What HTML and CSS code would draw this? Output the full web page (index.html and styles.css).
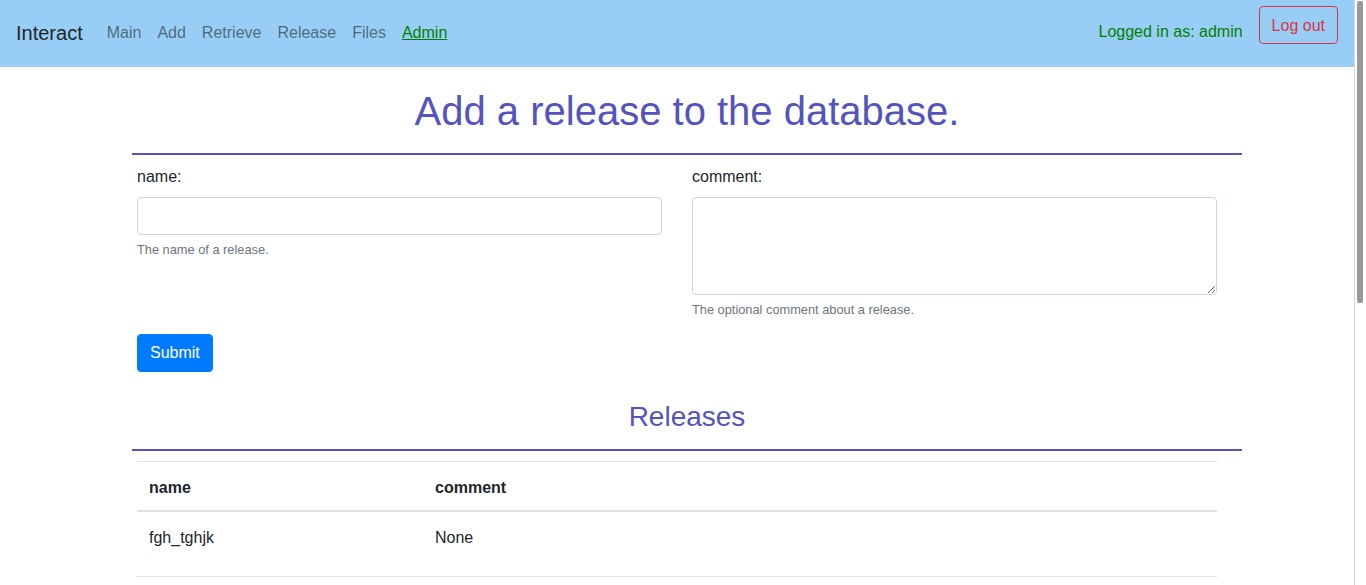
FILE: index.html
```html
<!DOCTYPE html>
<html lang="en">
<head>
<meta charset="utf-8">
<title>Interact - Release</title>
<link rel="stylesheet" href="styles.css">
</head>
<body>
<nav class="navbar">
  <div class="nav-left">
    <a class="brand" href="#">Interact</a>
    <ul class="nav-links">
      <li><a href="#">Main</a></li>
      <li><a href="#">Add</a></li>
      <li><a href="#">Retrieve</a></li>
      <li><a href="#">Release</a></li>
      <li><a href="#">Files</a></li>
      <li><a class="active" href="#">Admin</a></li>
    </ul>
  </div>
  <div class="nav-right">
    <span class="logged">Logged in as: admin</span>
    <button class="btn-logout" type="button">Log out</button>
  </div>
</nav>

<main class="container">
  <div class="heading-block">
    <h1 class="title">Add a release to the database.</h1>
    <hr class="rule">
  </div>

  <form class="release-form">
    <div class="form-row">
      <div class="form-group">
        <label for="name">name:</label>
        <input id="name" class="form-control" type="text">
        <small class="help">The name of a release.</small>
      </div>
      <div class="form-group">
        <label for="comment">comment:</label>
        <textarea id="comment" class="form-control textarea"></textarea>
        <small class="help">The optional comment about a release.</small>
      </div>
    </div>
    <button class="btn-submit" type="submit">Submit</button>
  </form>

  <div class="heading-block">
    <h3 class="subtitle">Releases</h3>
    <hr class="rule rule-2">
  </div>

  <div class="table-wrap">
    <table class="table">
      <thead>
        <tr><th class="col-name">name</th><th>comment</th></tr>
      </thead>
      <tbody>
        <tr><td>fgh_tghjk</td><td>None</td></tr>
        <tr><td>&nbsp;</td><td>&nbsp;</td></tr>
      </tbody>
    </table>
  </div>
</main>

<div class="scrollbar" aria-hidden="true"><div class="scrollbar-thumb"></div></div>
</body>
</html>
```

FILE: styles.css
```css
* { box-sizing: border-box; }

html, body {
  margin: 0;
  padding: 0;
}

body {
  font-family: "Liberation Sans", Arial, sans-serif;
  font-size: 16px;
  line-height: 1.5;
  color: #212529;
  background: #fff;
  padding-right: 12px;
}

.scrollbar {
  position: fixed;
  top: 0;
  right: 0;
  bottom: 0;
  width: 12px;
  background: #fff;
  border-left: 1px solid #d4d4d4;
  padding: 1px 3px 0 2px;
}

.scrollbar-thumb {
  height: 302px;
  background: #999;
  border-radius: 2px;
}

.navbar {
  height: 67px;
  background: #98cef5;
  display: flex;
  justify-content: space-between;
  align-items: center;
  padding: 0 16px;
}

.nav-left {
  display: flex;
  align-items: center;
  margin-top: -2px;
}

.brand {
  font-size: 20px;
  line-height: 30px;
  color: #212529;
  text-decoration: none;
  margin-right: 16px;
}

.nav-links {
  list-style: none;
  margin: 0;
  padding: 0;
  display: flex;
}

.nav-links a {
  display: block;
  padding: 8px;
  color: rgba(0, 0, 0, 0.5);
  text-decoration: none;
}

.nav-links a.active {
  color: #008000;
  text-decoration: underline;
}

.nav-right {
  display: flex;
  align-items: flex-start;
  align-self: stretch;
  gap: 16px;
}

.logged {
  color: #008000;
  margin-top: 20px;
}

.btn-logout {
  margin-top: 6px;
  height: 38px;
  padding: 1px 12px 0;
  font-family: inherit;
  font-size: 16px;
  color: #dc3545;
  background: transparent;
  border: 1px solid #dc3545;
  border-radius: 4px;
  line-height: 1.5;
}

.container {
  width: 1110px;
  margin: 0 auto;
}

.heading-block {
  margin-left: 10px;
  margin-right: -10px;
}

.title {
  margin: 20px 0 18px;
  font-size: 40px;
  font-weight: 400;
  line-height: 1.2;
  text-align: center;
  color: #5553bd;
}

.rule {
  margin: 0;
  border: 0;
  height: 2px;
  background: #5553bd;
}

.release-form {
  padding: 10px 15px 0;
}

.form-row {
  display: grid;
  grid-template-columns: 525px 525px;
  column-gap: 30px;
}

.form-group {
  display: flex;
  flex-direction: column;
  margin-bottom: 15px;
}

.form-group label {
  line-height: 24px;
  margin-bottom: 8px;
}

.form-control {
  display: block;
  width: 100%;
  height: 38px;
  padding: 6px 12px;
  font-family: inherit;
  font-size: 16px;
  color: #495057;
  background: #fff;
  border: 1px solid #ced4da;
  border-radius: 4px;
}

.textarea {
  height: 98px;
  resize: vertical;
}

.help {
  margin-top: 5px;
  font-size: 12.8px;
  line-height: 1.5;
  color: #6c757d;
}

.btn-submit {
  display: block;
  height: 38px;
  padding: 0 12px;
  font-family: inherit;
  font-size: 16px;
  color: #fff;
  background: #007bff;
  border: 1px solid #007bff;
  border-radius: 4px;
}

.subtitle {
  margin: 28px 0 15px;
  font-size: 28px;
  font-weight: 400;
  line-height: 1.2;
  text-align: center;
  color: #5553bd;
}

.table-wrap {
  padding: 10px 15px 40px;
}

.table {
  width: 100%;
  border-collapse: collapse;
}

.table th,
.table td {
  padding: 14px 12px 10px;
  text-align: left;
  vertical-align: top;
  border-top: 1px solid #dee2e6;
  line-height: 24px;
}

.table thead th {
  border-bottom: 2px solid #dee2e6;
  font-weight: 700;
}

.table td {
  padding-top: 14px;
  padding-bottom: 26px;
}

.col-name {
  width: 286px;
}
```
